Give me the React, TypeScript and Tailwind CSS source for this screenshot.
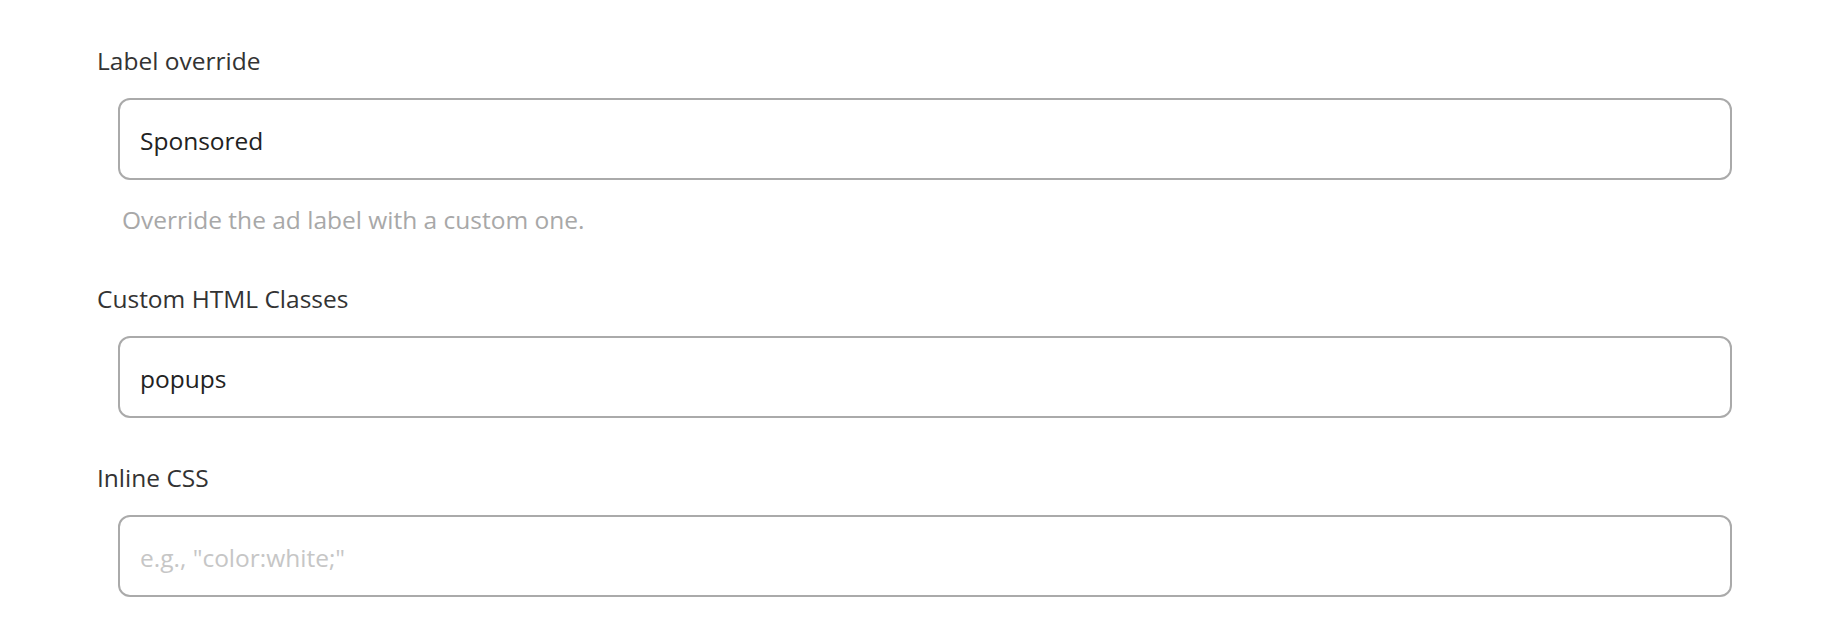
import { useState } from "react";

type Field = {
  label: string;
  value: string;
  placeholder?: string;
  help?: string;
};

const initialFields: Field[] = [
  { label: "Label override", value: "Sponsored", help: "Override the ad label with a custom one." },
  { label: "Custom HTML Classes", value: "popups" },
  { label: "Inline CSS", value: "", placeholder: 'e.g., "color:white;"' },
];

export default function App() {
  const [fields, setFields] = useState(initialFields);

  const update = (index: number, value: string) => {
    setFields((prev) => prev.map((f, i) => (i === index ? { ...f, value } : f)));
  };

  return (
    <div className="min-h-screen bg-white font-['Open_Sans','Noto_Sans',sans-serif] text-[24.5px] leading-[32px]">
      <div className="flex flex-col gap-[44px] pt-[45px] pl-[97px] pr-[116px]">
        {fields.map((field, index) => (
          <div key={field.label} className="flex flex-col">
            <label className="text-[#333333]">{field.label}</label>
            <input
              type="text"
              value={field.value}
              placeholder={field.placeholder}
              onChange={(e) => update(index, e.target.value)}
              className="mt-[21px] ml-[21px] h-[82px] rounded-[12px] border-2 border-[#aaaaaa] bg-white pl-5 pr-5 pt-[2px] text-[#222222] outline-none placeholder:text-[#c6c6c6]"
            />
            {field.help && (
              <p className="mt-[24px] mb-[3px] ml-[25px] text-[#a8a8a8]">{field.help}</p>
            )}
          </div>
        ))}
      </div>
    </div>
  );
}
